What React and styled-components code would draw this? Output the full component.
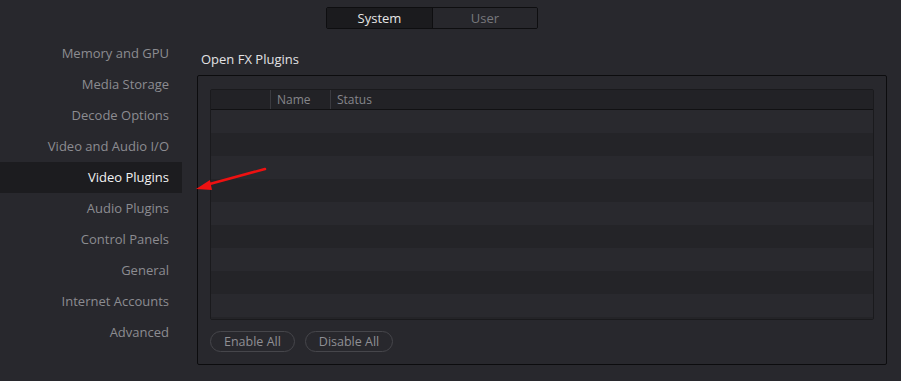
import React from "react";
import styled, { createGlobalStyle } from "styled-components";

const Global = createGlobalStyle`
  html, body { margin: 0; padding: 0; background: #28282d; }
  body { font-family: "Open Sans", "Noto Sans", sans-serif; }
`;

const Page = styled.div`
  position: relative;
  width: 901px;
  height: 381px;
  background: #28282d;
  overflow: hidden;
`;

const TopBar = styled.div`
  display: flex;
  padding: 7px 0 0 326px;
  height: 22px;
`;

const Tabs = styled.div`
  display: flex;
  border: 1px solid #0e0e10;
  border-radius: 2px;
  overflow: hidden;
`;

const Tab = styled.div`
  width: ${p => (p.$first ? 105 : 104)}px;
  display: flex;
  align-items: center;
  justify-content: center;
  font-size: 13px;
  color: ${p => (p.$active ? "#e6e6e6" : "#77777c")};
  background: ${p => (p.$active ? "#1b1b1e" : "#27272c")};
  border-left: ${p => (p.$first ? "none" : "1px solid #0e0e10")};
`;

const Body = styled.div`
  display: flex;
  margin-top: 9px;
`;

const Sidebar = styled.nav`
  width: 182px;
  display: flex;
  flex-direction: column;
`;

const NavItem = styled.div`
  height: 31px;
  box-sizing: border-box;
  padding-bottom: 2px;
  display: flex;
  align-items: center;
  justify-content: flex-end;
  padding-right: 13px;
  font-size: 13px;
  color: ${p => (p.$active ? "#f2f2f2" : "#8c8c91")};
  background: ${p => (p.$active ? "#1c1c1f" : "transparent")};
`;

const Content = styled.section`
  margin-left: 15px;
  width: 690px;
  display: flex;
  flex-direction: column;
`;

const Title = styled.div`
  font-size: 13px;
  color: #e2e2e4;
  padding: 12px 0 0 4px;
  line-height: 18px;
  height: 37px;
  box-sizing: border-box;
`;

const Box = styled.div`
  border: 1px solid #0c0c0e;
  border-radius: 2px;
  padding: 13px 12px 12px 12px;
  height: 290px;
  box-sizing: border-box;
  display: flex;
  flex-direction: column;
`;

const Table = styled.div`
  height: 232px;
  border: 1px solid #1a1a1d;
  border-radius: 2px;
  overflow: hidden;
  box-sizing: border-box;
  display: flex;
  flex-direction: column;
`;

const Header = styled.div`
  display: grid;
  grid-template-columns: 59px 60px 1fr;
  height: 19px;
  background: #222226;
  border-bottom: 1px solid #111113;
  flex-shrink: 0;
`;

const HeadCell = styled.div`
  font-size: 12px;
  color: #86868b;
  display: flex;
  align-items: center;
  padding-left: 6px;
  border-left: ${p => (p.$first ? "none" : "1px solid #3a3a3f")};
`;

const Row = styled.div`
  height: 23px;
  flex-shrink: 0;
  background: ${p => (p.$odd ? "#242428" : "#29292e")};
`;

const Buttons = styled.div`
  display: flex;
  gap: 10px;
  margin-top: 11px;
`;

const Pill = styled.button`
  height: 21px;
  padding: 0 13px;
  border: 1px solid #46464b;
  border-radius: 11px;
  background: transparent;
  color: #8f8f94;
  font-family: "Open Sans", "Noto Sans", sans-serif;
  font-size: 12.5px;
  display: flex;
  align-items: center;
`;

const Arrow = styled.svg`
  position: absolute;
  left: 190px;
  top: 160px;
`;

const items = [
  "Memory and GPU",
  "Media Storage",
  "Decode Options",
  "Video and Audio I/O",
  "Video Plugins",
  "Audio Plugins",
  "Control Panels",
  "General",
  "Internet Accounts",
  "Advanced",
];

export default function App() {
  return (
    <Page>
      <Global />
      <TopBar>
        <Tabs>
          <Tab $first $active>System</Tab>
          <Tab>User</Tab>
        </Tabs>
      </TopBar>
      <Body>
        <Sidebar>
          {items.map((t, i) => (
            <NavItem key={t} $active={i === 4}>{t}</NavItem>
          ))}
        </Sidebar>
        <Content>
          <Title>Open FX Plugins</Title>
          <Box>
            <Table>
              <Header>
                <HeadCell $first />
                <HeadCell>Name</HeadCell>
                <HeadCell>Status</HeadCell>
              </Header>
              {Array.from({ length: 10 }).map((_, i) => (
                <Row key={i} $odd={i % 2 === 1} />
              ))}
            </Table>
            <Buttons>
              <Pill>Enable All</Pill>
              <Pill>Disable All</Pill>
            </Buttons>
          </Box>
        </Content>
      </Body>
      <Arrow width="80" height="40" viewBox="0 0 80 40">
        <line x1="75" y1="9" x2="16" y2="25" stroke="#ee1111" strokeWidth="2.6" strokeLinecap="round" />
        <polygon points="6,29 20,20 22,30" fill="#ee1111" />
      </Arrow>
    </Page>
  );
}
